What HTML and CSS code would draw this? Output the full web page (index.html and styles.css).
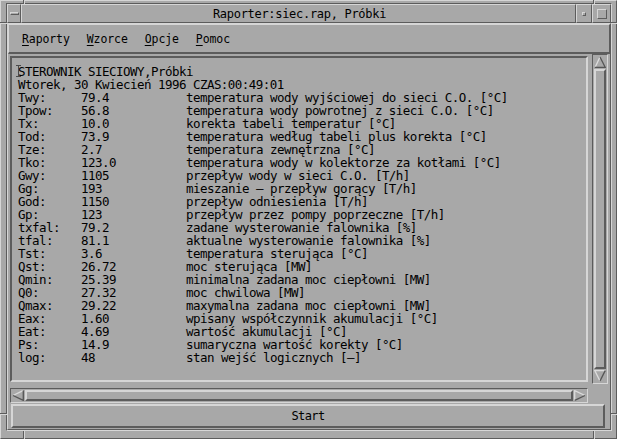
FILE: index.html
```html
<!DOCTYPE html>
<html lang="pl">
<head>
<meta charset="utf-8">
<title>Raporter</title>
<link rel="stylesheet" href="styles.css">
</head>
<body>
<div class="win">
  <span class="notch nv nt n1"></span>
  <span class="notch nv nt n2"></span>
  <span class="notch nv nb n1"></span>
  <span class="notch nv nb n2"></span>
  <span class="notch nh nl h1"></span>
  <span class="notch nh nr h1"></span>
  <span class="notch nh nl h2"></span>
  <span class="notch nh nr h2"></span>
  <div class="frame">
    <div class="titlebar">
      <div class="tb tb-menu"><span class="tb-bar"></span></div>
      <div class="tb tb-title">Raporter:siec.rap, Próbki</div>
      <div class="tb tb-min"><span class="tb-dot"></span></div>
      <div class="tb tb-max"><span class="tb-sq"></span></div>
    </div>
    <div class="main">
      <div class="menubar">
        <span class="mi"><u>R</u>aporty</span>
        <span class="mi"><u>W</u>zorce</span>
        <span class="mi"><u>O</u>pcje</span>
        <span class="mi"><u>P</u>omoc</span>
      </div>
      <div class="work">
        <div class="row">
          <div class="text">
            <svg class="caret" width="5" height="12" viewBox="0 0 5 12"><path d="M0 0.5H5M2.5 0.5V11.5M0 11.5H5" stroke="#4a4a4a" stroke-width="1" fill="none"/></svg>
            <div class="grid">
              <div class="full">STEROWNIK SIECIOWY,Próbki</div>
              <div class="full">Wtorek, 30 Kwiecień 1996 CZAS:00:49:01</div>
              <div>Twy:</div><div>79.4</div><div>temperatura wody wyjściowej do sieci C.O. [°C]</div>
              <div>Tpow:</div><div>56.8</div><div>temperatura wody powrotnej z sieci C.O. [°C]</div>
              <div>Tx:</div><div>10.0</div><div>korekta tabeli temperatur [°C]</div>
              <div>Tod:</div><div>73.9</div><div>temperatura według tabeli plus korekta [°C]</div>
              <div>Tze:</div><div>2.7</div><div>temperatura zewnętrzna [°C]</div>
              <div>Tko:</div><div>123.0</div><div>temperatura wody w kolektorze za kotłami [°C]</div>
              <div>Gwy:</div><div>1105</div><div>przepływ wody w sieci C.O. [T/h]</div>
              <div>Gg:</div><div>193</div><div>mieszanie – przepływ gorący [T/h]</div>
              <div>God:</div><div>1150</div><div>przepływ odniesienia [T/h]</div>
              <div>Gp:</div><div>123</div><div>przepływ przez pompy poprzeczne [T/h]</div>
              <div>txfal:</div><div>79.2</div><div>zadane wysterowanie falownika [%]</div>
              <div>tfal:</div><div>81.1</div><div>aktualne wysterowanie falownika [%]</div>
              <div>Tst:</div><div>3.6</div><div>temperatura sterująca [°C]</div>
              <div>Qst:</div><div>26.72</div><div>moc sterująca [MW]</div>
              <div>Qmin:</div><div>25.39</div><div>minimalna zadana moc ciepłowni [MW]</div>
              <div>Q0:</div><div>27.32</div><div>moc chwilowa [MW]</div>
              <div>Qmax:</div><div>29.22</div><div>maxymalna zadana moc ciepłowni [MW]</div>
              <div>Eax:</div><div>1.60</div><div>wpisany współczynnik akumulacji [°C]</div>
              <div>Eat:</div><div>4.69</div><div>wartość akumulacji [°C]</div>
              <div>Ps:</div><div>14.9</div><div>sumaryczna wartość korekty [°C]</div>
              <div>log:</div><div>48</div><div>stan wejść logicznych [–]</div>
            </div>
          </div>
          <div class="vscroll">
            <svg class="arrow" width="12" height="12" viewBox="0 0 12 12">
              <polygon points="6,1 11,11 1,11" fill="#a8a8a8"/>
              <path d="M1 11.5L6 1" stroke="#dcdcdc" stroke-width="1.3" fill="none"/>
              <path d="M6 1L11.3 11.5H0.8" stroke="#555" stroke-width="1.3" fill="none"/>
            </svg>
            <div class="vslider"></div>
            <svg class="arrow" width="12" height="12" viewBox="0 0 12 12">
              <polygon points="1,1 11,1 6,11" fill="#a8a8a8"/>
              <path d="M6 11L0.8 0.6H11" stroke="#dcdcdc" stroke-width="1.3" fill="none"/>
              <path d="M11.2 0.6L6 11" stroke="#555" stroke-width="1.3" fill="none"/>
            </svg>
          </div>
        </div>
        <div class="hscroll">
          <svg class="arrow" width="12" height="11" viewBox="0 0 12 11">
            <polygon points="1,5.5 11,1 11,10" fill="#a8a8a8"/>
            <path d="M1 5.5L11 0.6" stroke="#dcdcdc" stroke-width="1.3" fill="none"/>
            <path d="M1 5.5L11.3 10.4V0.6" stroke="#555" stroke-width="1.3" fill="none"/>
          </svg>
          <div class="hslider"></div>
          <svg class="arrow" width="12" height="11" viewBox="0 0 12 11">
            <polygon points="1,1 11,5.5 1,10" fill="#a8a8a8"/>
            <path d="M0.7 10.4V0.6L11 5.5" stroke="#dcdcdc" stroke-width="1.3" fill="none"/>
            <path d="M11 5.5L0.7 10.4" stroke="#555" stroke-width="1.3" fill="none"/>
          </svg>
        </div>
        <div class="startbtn">Start</div>
      </div>
    </div>
  </div>
</div>
</body>
</html>
```
FILE: styles.css
```css
* { box-sizing: border-box; }
html, body { margin: 0; padding: 0; }
body {
  width: 617px;
  height: 439px;
  overflow: hidden;
  background: #a8a8a8;
  color: #000;
  font-family: "DejaVu Sans Mono", "Liberation Mono", monospace;
}
.win {
  position: relative;
  width: 617px;
  height: 439px;
  border: 1px solid;
  border-color: #d6d6d6 #5c5c5c #5c5c5c #d6d6d6;
  padding: 2px 4px 7px 5px;
}
.frame {
  height: 100%;
  border: 1px solid;
  border-color: #5c5c5c #d6d6d6 #d6d6d6 #5c5c5c;
  display: flex;
  flex-direction: column;
}
.notch { position: absolute; }
.nv { width: 2px; border-left: 1px solid #5c5c5c; border-right: 1px solid #d6d6d6; }
.nh { height: 2px; border-top: 1px solid #5c5c5c; border-bottom: 1px solid #d6d6d6; }
.nt { top: -1px; height: 4px; }
.nb { bottom: -1px; height: 8px; }
.n1 { left: 22px; }
.n2 { left: 592px; }
.nl { left: -1px; width: 7px; }
.nr { right: -1px; width: 6px; }
.h1 { top: 21px; }
.h2 { top: 412px; }

.titlebar {
  height: 19px;
  display: flex;
  flex: none;
}
.tb {
  border: 1px solid;
  border-color: #d6d6d6 #5c5c5c #5c5c5c #d6d6d6;
  display: flex;
  align-items: center;
  justify-content: center;
}
.tb-menu { width: 14px; }
.tb-bar {
  width: 9px;
  height: 3px;
  border: 1px solid;
  border-color: #d6d6d6 #5c5c5c #5c5c5c #d6d6d6;
}
.tb-title {
  flex: 1;
  font-size: 12px;
  letter-spacing: -0.3px;
  padding-left: 2px;
}
.tb-min { width: 16px; }
.tb-dot {
  width: 4px;
  height: 4px;
  border: 1px solid;
  border-color: #d6d6d6 #5c5c5c #5c5c5c #d6d6d6;
}
.tb-max { width: 19px; }
.tb-sq {
  width: 10px;
  height: 10px;
  border: 1px solid;
  border-color: #d6d6d6 #5c5c5c #5c5c5c #d6d6d6;
}

.main {
  height: 407px;
  border: 1px solid;
  border-color: #d6d6d6 #5c5c5c #5c5c5c #d6d6d6;
  display: flex;
  flex-direction: column;
}
.menubar {
  height: 30px;
  flex: none;
  border-style: solid;
  border-width: 1px 1px 2px 1px;
  border-color: #d6d6d6 #5c5c5c #5c5c5c #d6d6d6;
  display: flex;
  align-items: center;
  gap: 17px;
  padding: 1px 0 0 13px;
  font-size: 11.5px;
  letter-spacing: -0.1px;
}
.mi u {
  text-decoration: underline;
  text-underline-offset: 2px;
  text-decoration-thickness: 1px;
}
.work {
  flex: 1;
  display: flex;
  flex-direction: column;
  padding: 0 2px;
}
.row {
  height: 330px;
  display: flex;
  align-items: center;
  gap: 4px;
  flex: none;
}
.text {
  position: relative;
  width: 578px;
  height: 326px;
  border: 2px solid;
  border-color: #5c5c5c #d6d6d6 #d6d6d6 #5c5c5c;
  padding: 7px 0 0 6px;
  overflow: hidden;
}
.caret { position: absolute; left: 4px; top: 7px; }
.grid {
  display: grid;
  grid-template-columns: 63px 105px 1fr;
  font-size: 12.5px;
  letter-spacing: -0.53px;
  line-height: 13px;
  white-space: pre;
}
.full { grid-column: 1 / -1; }

.vscroll {
  width: 16px;
  height: 330px;
  border: 1px solid;
  border-color: #5c5c5c #d6d6d6 #d6d6d6 #5c5c5c;
  padding: 1px;
  display: flex;
  flex-direction: column;
  gap: 1px;
}
.arrow { display: block; flex: none; }
.vslider {
  flex: 1;
  border: 2px solid;
  border-color: #d6d6d6 #5c5c5c #5c5c5c #d6d6d6;
}
.hscroll {
  margin-top: 4px;
  width: 578px;
  height: 15px;
  flex: none;
  border: 1px solid;
  border-color: #5c5c5c #d6d6d6 #d6d6d6 #5c5c5c;
  padding: 1px;
  display: flex;
  gap: 1px;
}
.hslider {
  flex: 1;
  border: 2px solid;
  border-color: #d6d6d6 #5c5c5c #5c5c5c #d6d6d6;
}
.startbtn {
  margin: 1px 0 0 1px;
  width: 594px;
  height: 24px;
  flex: none;
  border: 2px solid;
  border-color: #d6d6d6 #5c5c5c #5c5c5c #d6d6d6;
  display: flex;
  align-items: center;
  justify-content: center;
  font-size: 12px;
  letter-spacing: -0.6px;
}
```
